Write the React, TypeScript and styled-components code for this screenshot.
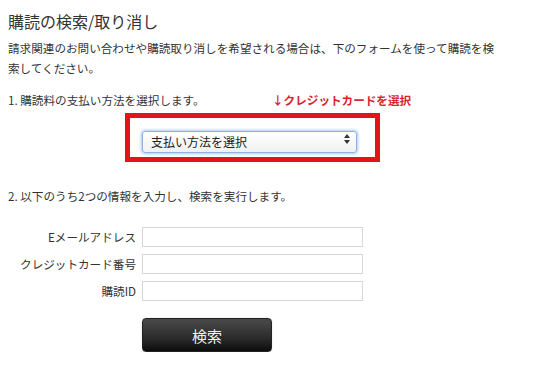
import styled, { createGlobalStyle } from "styled-components";

const GlobalStyle = createGlobalStyle`
  body {
    margin: 0;
    background: #ffffff;
    font-family: "Noto Sans CJK JP", "Noto Sans", sans-serif;
    color: #333333;
  }
`;

const Page = styled.div`
  padding: 9px 8px 0 8px;
  width: 542px;
  box-sizing: border-box;
`;

const Title = styled.h1`
  margin: 0;
  font-size: 16px;
  font-weight: normal;
  line-height: 24px;
  color: #333333;
`;

const Lead = styled.p`
  margin: 5px 0 0 0;
  width: 492px;
  font-size: 11.6px;
  line-height: 20px;
`;

const StepRow = styled.div`
  margin-top: 12px;
  display: grid;
  grid-template-columns: 264px auto;
  font-size: 11.6px;
  line-height: 20px;
`;

const Note = styled.span`
  color: #d8262c;
  font-weight: bold;
`;

const Highlight = styled.div`
  margin: 3px 0 0 117px;
  width: 255px;
  height: 49px;
  box-sizing: border-box;
  border: 5px solid #e1141e;
  padding: 10px 0 0 12px;
`;

const SelectWrap = styled.div`
  position: relative;
  width: 215px;
  height: 22px;
`;

const Select = styled.select`
  appearance: none;
  width: 100%;
  height: 100%;
  box-sizing: border-box;
  border: 1px solid #8fb1dc;
  border-radius: 3px;
  box-shadow: 0 0 3px 1px #a9c7ee;
  background: linear-gradient(#ffffff, #f1f1f1);
  padding: 0 0 0 8px;
  font-family: inherit;
  font-size: 12px;
  color: #222222;
  outline: none;
`;

const Arrows = styled.svg`
  position: absolute;
  right: 7px;
  top: 6px;
  pointer-events: none;
`;

const Step2 = styled.div`
  margin-top: 24px;
  font-size: 11.6px;
  line-height: 20px;
`;

const Form = styled.div`
  margin-top: 21px;
  display: grid;
  grid-template-columns: 128px 221px;
  column-gap: 6px;
  row-gap: 7px;
  align-items: center;
`;

const Label = styled.label`
  text-align: right;
  font-size: 11.6px;
  color: #333333;
  white-space: nowrap;
`;

const Input = styled.input`
  height: 20px;
  box-sizing: border-box;
  border: 1px solid #d6d6d6;
  background: #ffffff;
  margin: 0;
  outline: none;
`;

const Button = styled.button`
  margin: 17px 0 0 134px;
  width: 130px;
  height: 34px;
  border: 1px solid #222222;
  border-radius: 4px;
  background: linear-gradient(#4a4a4a, #2b2b2b 60%, #0c0c0c);
  color: #f2f2f2;
  font-family: inherit;
  font-size: 15px;
  box-shadow: 0 0 1px rgba(0, 0, 0, 0.4);
`;

const App = () => {
  return (
    <Page>
      <GlobalStyle />
      <Title>購読の検索/取り消し</Title>
      <Lead>
        請求関連のお問い合わせや購読取り消しを希望される場合は、下のフォームを使って購読を検索してください。
      </Lead>
      <StepRow>
        <span>1. 購読料の支払い方法を選択します。</span>
        <Note>↓クレジットカードを選択</Note>
      </StepRow>
      <Highlight>
        <SelectWrap>
          <Select defaultValue="">
            <option value="">支払い方法を選択</option>
          </Select>
          <Arrows width="6" height="10" viewBox="0 0 6 10">
            <path d="M3 0 L6 4 L0 4 Z" fill="#333" />
            <path d="M3 10 L6 6 L0 6 Z" fill="#333" />
          </Arrows>
        </SelectWrap>
      </Highlight>
      <Step2>2. 以下のうち2つの情報を入力し、検索を実行します。</Step2>
      <Form>
        <Label>Eメールアドレス</Label>
        <Input type="text" />
        <Label>クレジットカード番号</Label>
        <Input type="text" />
        <Label>購読ID</Label>
        <Input type="text" />
      </Form>
      <Button>検索</Button>
    </Page>
  );
};

export default App;
